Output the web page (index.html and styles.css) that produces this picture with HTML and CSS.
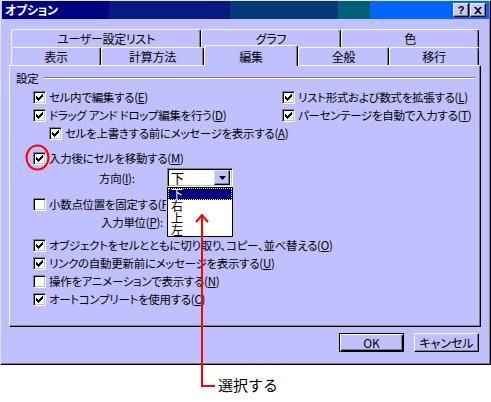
FILE: index.html
```html
<!DOCTYPE html>
<html lang="ja">
<head>
  <meta charset="UTF-8" />
  <title>オプション</title>
  <link rel="stylesheet" href="styles.css">
</head>
<body>
  <div class="dialog">

    <!-- title bar -->
    <div class="titlebar">
      <span class="title">オプション</span>
      <div class="title-buttons">
        <span class="tbtn">?</span>
        <span class="tbtn">
          <svg width="8" height="7" viewBox="0 0 8 7"><path d="M0 0h2l2 2l2-2h2l-3 3.5l3 3.5h-2l-2-2l-2 2h-2l3-3.5z" fill="#000"/></svg>
        </span>
      </div>
    </div>

    <!-- tabs -->
    <div class="tabs">
      <div class="tab-row">
        <div class="tab t-user">ユーザー設定リスト</div>
        <div class="tab t-graph">グラフ</div>
        <div class="tab t-color">色</div>
      </div>
      <div class="tab-row">
        <div class="tab t-view">表示</div>
        <div class="tab t-calc">計算方法</div>
        <div class="tab t-edit active">編集</div>
        <div class="tab t-general">全般</div>
        <div class="tab t-move">移行</div>
      </div>
    </div>

    <!-- panel -->
    <div class="panel">
      <div class="group-title"><span>設定</span><span class="groove"></span></div>

      <div class="top-section">
        <div class="col-left">
          <div class="row"><span class="cb"><svg width="7" height="7" viewBox="0 0 7 7"><path d="M0 2H1V3H2V4H3V3H4V2H5V1H6V0H7V3H6V4H5V5H4V6H3V7H2V6H1V5H0Z"/></svg></span>セル内で編集する(<u>E</u>)</div>
          <div class="row"><span class="cb"><svg width="7" height="7" viewBox="0 0 7 7"><path d="M0 2H1V3H2V4H3V3H4V2H5V1H6V0H7V3H6V4H5V5H4V6H3V7H2V6H1V5H0Z"/></svg></span>ドラッグ アンド ドロップ編集を行う(<u>D</u>)</div>
          <div class="row sub"><span class="cb"><svg width="7" height="7" viewBox="0 0 7 7"><path d="M0 2H1V3H2V4H3V3H4V2H5V1H6V0H7V3H6V4H5V5H4V6H3V7H2V6H1V5H0Z"/></svg></span>セルを上書きする前にメッセージを表示する(<u>A</u>)</div>
        </div>
        <div class="col-right">
          <div class="row"><span class="cb"><svg width="7" height="7" viewBox="0 0 7 7"><path d="M0 2H1V3H2V4H3V3H4V2H5V1H6V0H7V3H6V4H5V5H4V6H3V7H2V6H1V5H0Z"/></svg></span>リスト形式および数式を拡張する(<u>L</u>)</div>
          <div class="row"><span class="cb"><svg width="7" height="7" viewBox="0 0 7 7"><path d="M0 2H1V3H2V4H3V3H4V2H5V1H6V0H7V3H6V4H5V5H4V6H3V7H2V6H1V5H0Z"/></svg></span>パーセンテージを自動で入力する(<u>T</u>)</div>
        </div>
      </div>

      <div class="row move"><span class="cb"><svg width="7" height="7" viewBox="0 0 7 7"><path d="M0 2H1V3H2V4H3V3H4V2H5V1H6V0H7V3H6V4H5V5H4V6H3V7H2V6H1V5H0Z"/></svg></span>入力後にセルを移動する(<u>M</u>)</div>

      <div class="field dir">
        <span class="field-label">方向(<u>I</u>):</span>
        <div class="combo">
          <span class="combo-value">下</span>
          <span class="combo-btn"><svg width="7" height="4" viewBox="0 0 7 4"><path d="M0 0h7l-3.5 4z"/></svg></span>
          <ul class="combo-list">
            <li class="selected"><span>下</span></li>
            <li>右</li>
            <li>上</li>
            <li>左</li>
          </ul>
        </div>
      </div>

      <div class="row decimal"><span class="cb"></span><span class="hidden-under">小数点位置を固定する(<u>F</u>)</span></div>

      <div class="field unit">
        <span class="field-label">入力単位(<u>P</u>):</span>
      </div>

      <div class="row objects"><span class="cb"><svg width="7" height="7" viewBox="0 0 7 7"><path d="M0 2H1V3H2V4H3V3H4V2H5V1H6V0H7V3H6V4H5V5H4V6H3V7H2V6H1V5H0Z"/></svg></span>オブジェクトをセルとともに切り取り、コピー、並べ替える(<u>O</u>)</div>
      <div class="row"><span class="cb"><svg width="7" height="7" viewBox="0 0 7 7"><path d="M0 2H1V3H2V4H3V3H4V2H5V1H6V0H7V3H6V4H5V5H4V6H3V7H2V6H1V5H0Z"/></svg></span>リンクの自動更新前にメッセージを表示する(<u>U</u>)</div>
      <div class="row"><span class="cb"></span>操作をアニメーションで表示する(<u>N</u>)</div>
      <div class="row"><span class="cb"><svg width="7" height="7" viewBox="0 0 7 7"><path d="M0 2H1V3H2V4H3V3H4V2H5V1H6V0H7V3H6V4H5V5H4V6H3V7H2V6H1V5H0Z"/></svg></span>オートコンプリートを使用する(<u>C</u>)</div>
    </div>

    <!-- OK / cancel -->
    <div class="buttons">
      <button class="btn default">OK</button>
      <button class="btn">キャンセル</button>
    </div>
  </div>

  <div class="note">選択する</div>

  <!-- red markings drawn over the screenshot -->
  <svg class="marks" width="491" height="402" viewBox="0 0 491 402">
    <ellipse cx="37.5" cy="157.5" rx="11" ry="12" fill="none" stroke="#f00" stroke-width="2"/>
    <polyline points="196,222 202,215 208,222" fill="none" stroke="#f00" stroke-width="2"/>
    <rect x="201" y="215" width="2" height="172" fill="#f00"/>
    <rect x="201" y="385" width="14" height="2" fill="#f00"/>
  </svg>
</body>
</html>
```

FILE: styles.css
```css
* {
  margin: 0;
  padding: 0;
  box-sizing: border-box;
}

body {
  position: relative;
  width: 491px;
  height: 402px;
  overflow: hidden;
  background: #fff;
  color: #000;
  font-family: "Noto Sans CJK JP", "Noto Sans", sans-serif;
  font-size: 11.5px;
  letter-spacing: -0.3px;
  font-feature-settings: "palt";
}

u {
  text-decoration: underline;
  text-underline-offset: 1px;
}

.dialog {
  width: 491px;
  height: 365px;
  padding: 0 1px;
  background: #c0c0ff;
  border: 1px solid;
  border-color: #e0e0ff #000 #000 #e0e0ff;
  box-shadow: inset -1px -1px #808080;
}

/* title bar */
.titlebar {
  height: 18px;
  display: flex;
  align-items: center;
  justify-content: space-between;
  padding: 0 3px 0 3px;
  background: linear-gradient(to right,
    #000080 0 107px,
    #061a80 107px 228px,
    #043a7a 228px 336px,
    #006078 336px 368px,
    #0064ff 368px);
}

.title {
  color: #fff;
  font-weight: bold;
  font-size: 12px;
  line-height: 18px;
}

.title-buttons {
  display: flex;
  gap: 1px;
}

.tbtn {
  width: 16px;
  height: 14px;
  display: flex;
  align-items: center;
  justify-content: center;
  background: #c8c8f0;
  border: 1px solid;
  border-color: #fff #000 #000 #fff;
  box-shadow: inset -1px -1px #808080;
  font-family: "Liberation Sans", sans-serif;
  font-weight: bold;
  font-size: 11px;
  line-height: 1;
}

/* tabs */
.tabs {
  margin-top: 10px;
  padding-left: 9px;
}

.tab-row {
  display: flex;
  height: 18px;
}

.tab {
  height: 18px;
  display: flex;
  align-items: center;
  justify-content: center;
  font-size: 12px;
  border-top: 1px solid #fff;
  border-left: 1px solid #fff;
  border-right: 1px solid #000;
  border-radius: 3px 3px 0 0;
  box-shadow: inset -1px 0 #808080;
  background: #c0c0ff;
}

.t-user { width: 190px; }
.t-graph { width: 140px; }
.t-color { width: 138px; }
.t-view { width: 90px; }
.t-calc { width: 103px; }
.t-edit { width: 94px; }
.t-general { width: 91px; }
.t-move { width: 90px; }

.tab.active {
  position: relative;
  z-index: 2;
  height: 21px;
  margin-top: -2px;
}

/* panel */
.panel {
  margin-left: 7px;
  width: 472px;
  height: 262px;
  padding-top: 5px;
  border: 1px solid;
  border-color: #fff #000 #000 #fff;
  box-shadow: inset -1px -1px #808080;
}

.group-title {
  display: flex;
  align-items: center;
  height: 14px;
  margin-left: 6px;
  margin-right: 5px;
}

.groove {
  flex: 1;
  margin-left: 6px;
  height: 2px;
  border-top: 1px solid #808080;
  border-bottom: 1px solid #fff;
}

.top-section {
  display: flex;
  margin-top: 3px;
}

.col-left {
  width: 272px;
}

.row {
  display: flex;
  align-items: center;
  height: 18px;
  margin-left: 23px;
  white-space: nowrap;
}

.col-right .row {
  margin-left: 0;
}

.row.sub {
  margin-left: 39px;
}

.cb {
  flex: none;
  width: 13px;
  height: 13px;
  margin-right: 3px;
  display: flex;
  align-items: center;
  justify-content: center;
  background: #fff;
  border: 1px solid;
  border-color: #808080 #fff #fff #808080;
  box-shadow: inset 1px 1px #000, inset -1px -1px #c0c0c0;
}

.cb svg {
  fill: #000;
}

.row.move {
  margin-top: 7px;
}

.field {
  display: flex;
  align-items: center;
  white-space: nowrap;
}

.field.dir {
  height: 19px;
  margin-top: 1px;
  margin-left: 89px;
}

.field.unit {
  height: 18px;
  margin-left: 91px;
}

.field-label {
  width: 68px;
}

.field.unit .field-label {
  width: 66px;
}

.combo {
  position: relative;
  width: 66px;
  height: 19px;
  display: flex;
  align-items: center;
  padding: 2px;
  background: #fff;
  border: 1px solid;
  border-color: #808080 #fff #fff #808080;
  box-shadow: inset 1px 1px #000, inset -1px -1px #c0c0c0;
}

.combo-value {
  flex: 1;
  padding-left: 1px;
  font-size: 13px;
  line-height: 15px;
}

.combo-btn {
  width: 16px;
  height: 15px;
  display: flex;
  align-items: center;
  justify-content: center;
  background: #c0c0ff;
  border: 1px solid;
  border-color: #e0e0ff #000 #000 #e0e0ff;
  box-shadow: inset -1px -1px #808080;
}

.combo-list {
  position: absolute;
  z-index: 5;
  left: -1px;
  top: 18px;
  width: 66px;
  height: 50px;
  list-style: none;
  background: #fff;
  border: 1px solid #000;
}

.combo-list li {
  height: 12px;
  padding-left: 3px;
  font-size: 12px;
  line-height: 12px;
}

.combo-list li.selected {
  background: #000080;
  color: #fff;
  outline: 1px dotted #ffff80;
  outline-offset: -1px;
}

.row.decimal {
  margin-top: 8px;
}

/* the part of this label under the open list is not visible */
.hidden-under {
  max-width: 117px;
  overflow: hidden;
}

.row.objects {
  margin-top: 5px;
}

/* buttons */
.buttons {
  display: flex;
  justify-content: flex-end;
  gap: 10px;
  margin-top: 6px;
  padding-right: 10px;
}

.btn {
  width: 65px;
  height: 19px;
  background: #c0c0ff;
  border: 1px solid;
  border-color: #fff #000 #000 #fff;
  box-shadow: inset -1px -1px #808080;
  font-family: inherit;
  font-size: 12px;
  font-feature-settings: "palt";
  color: #000;
}

.btn.default {
  border-color: #000;
  box-shadow: inset 1px 1px #fff, inset -1px -1px #000, inset -2px -2px #808080;
}

/* annotation */
.note {
  margin-top: 12px;
  padding-left: 218px;
  font-size: 15px;
  line-height: 16px;
  letter-spacing: 0;
  font-feature-settings: normal;
}

.marks {
  position: absolute;
  top: 0;
  left: 0;
  z-index: 10;
  pointer-events: none;
}
```
